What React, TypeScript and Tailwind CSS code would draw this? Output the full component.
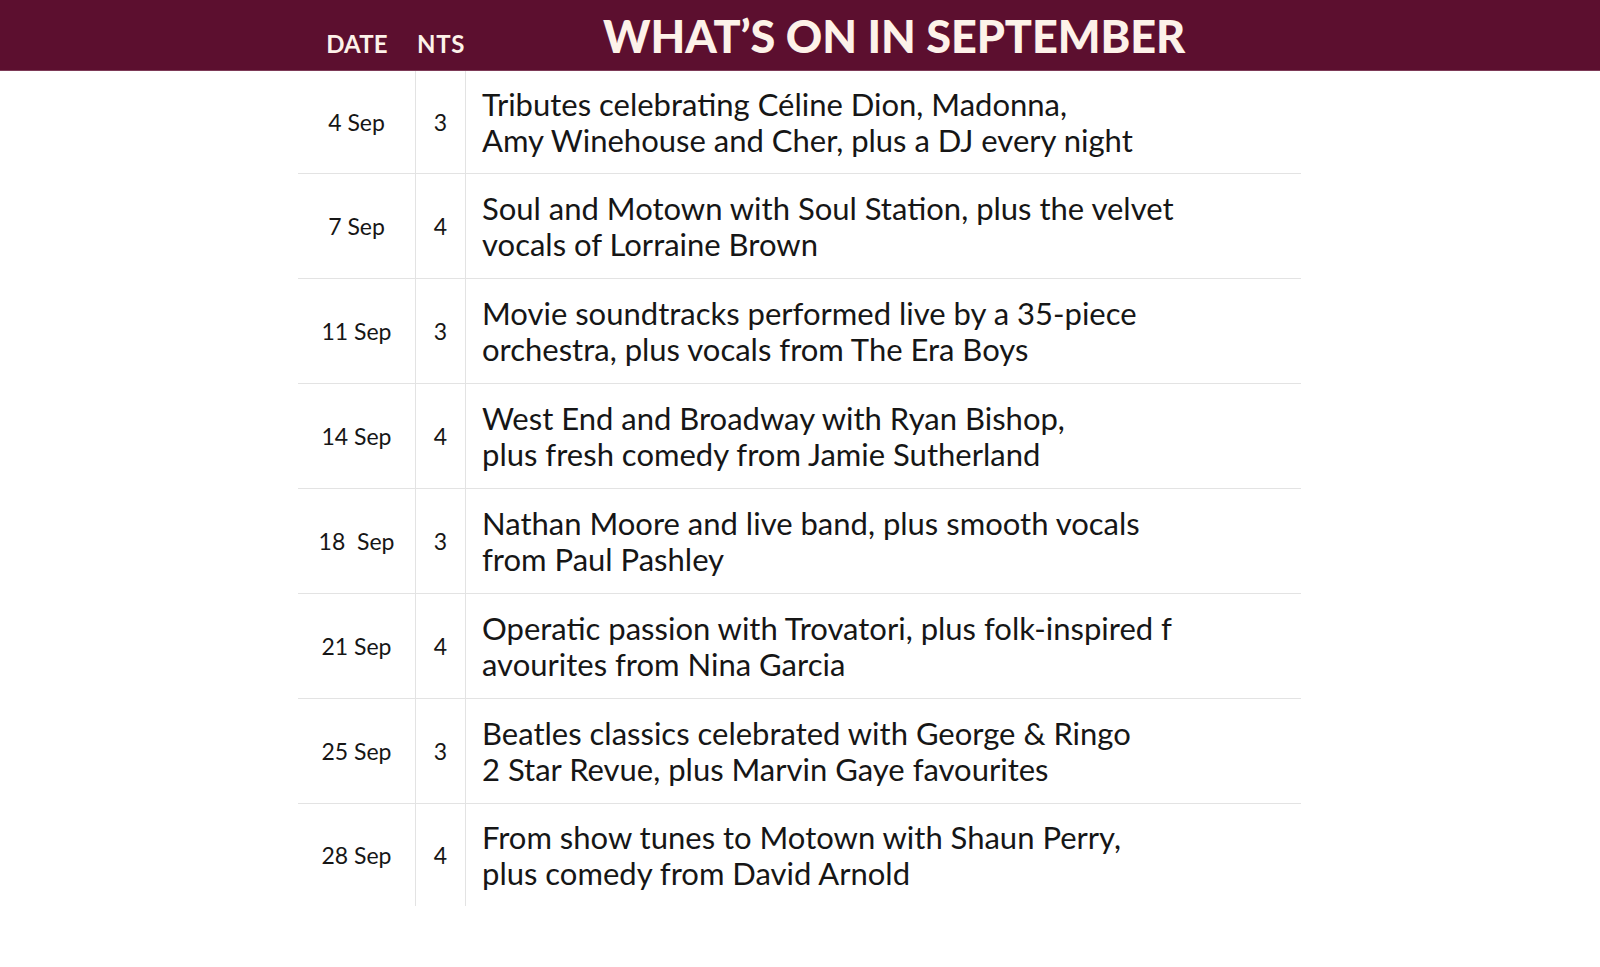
const rows = [
  { date: "4 Sep", nts: "3", lines: ["Tributes celebrating Céline Dion, Madonna,", "Amy Winehouse and Cher, plus a DJ every night"] },
  { date: "7 Sep", nts: "4", lines: ["Soul and Motown with Soul Station, plus the velvet", "vocals of Lorraine Brown"] },
  { date: "11 Sep", nts: "3", lines: ["Movie soundtracks performed live by a 35-piece", "orchestra, plus vocals from The Era Boys"] },
  { date: "14 Sep", nts: "4", lines: ["West End and Broadway with Ryan Bishop,", "plus fresh comedy from Jamie Sutherland"] },
  { date: "18\u00a0\u00a0Sep", nts: "3", lines: ["Nathan Moore and live band, plus smooth vocals", "from Paul Pashley"] },
  { date: "21 Sep", nts: "4", lines: ["Operatic passion with Trovatori, plus folk-inspired f", "avourites from Nina Garcia"] },
  { date: "25 Sep", nts: "3", lines: ["Beatles classics celebrated with George & Ringo", "2 Star Revue, plus Marvin Gaye favourites"] },
  { date: "28 Sep", nts: "4", lines: ["From show tunes to Motown with Shaun Perry,", "plus comedy from David Arnold"] },
];

export default function App() {
  return (
    <div className="w-[1600px] h-[967px] bg-white font-['Lato',sans-serif] text-[#161616]">
      {/* header bar */}
      <div className="h-[71px] bg-[#5c0f2f] border-b border-[#7d3a57]">
        <div className="ml-[298px] flex items-baseline pt-[12px] text-[#fdf2e9] font-bold">
          <div className="w-[118px] text-center text-[24px] tracking-[0.2px]">DATE</div>
          <div className="w-[50px] text-center text-[24px] tracking-[0.6px]">NTS</div>
          <div className="pl-[137px] text-[45px] leading-[48px] font-black tracking-[-0.1px]">WHAT’S ON IN SEPTEMBER</div>
        </div>
      </div>

      {/* schedule table */}
      <div className="ml-[298px] w-[1003px]">
        {rows.map((r, i) => (
          <div
            key={i}
            className={`flex ${i === 0 ? "h-[103px]" : i === rows.length - 1 ? "h-[102px]" : "h-[105px]"} ${i < rows.length - 1 ? "border-b border-[#e3e3e3]" : ""}`}
          >
            <div className="w-[118px] border-r border-[#e3e3e3] flex items-center justify-center text-[23px]">{r.date}</div>
            <div className="w-[50px] border-r border-[#e3e3e3] flex items-center justify-center text-[23px]">{r.nts}</div>
            <div className="flex-1 flex flex-col justify-center pl-[16px] text-[31px] leading-[36px]">
              {r.lines.map((l, j) => (
                <div key={j} className="whitespace-nowrap">{l}</div>
              ))}
            </div>
          </div>
        ))}
      </div>
    </div>
  );
}
